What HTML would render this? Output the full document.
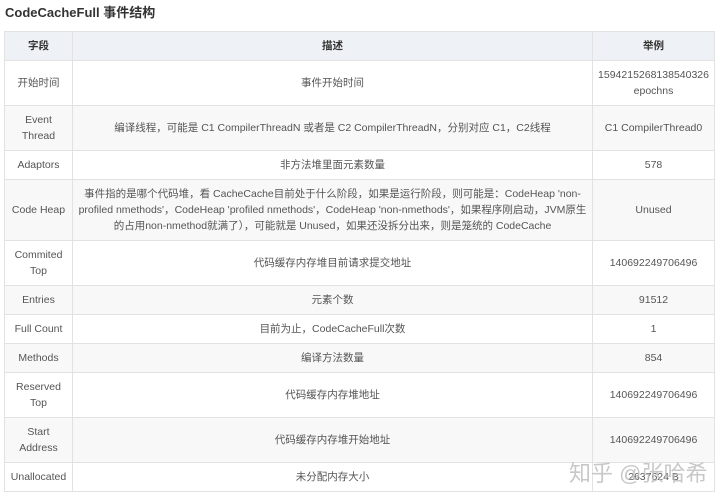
<!DOCTYPE html>
<html><head><meta charset="utf-8"><style>
body{margin:0;background:#fff;width:720px;height:498px;overflow:hidden;font-family:"Liberation Sans","Noto Sans CJK SC",sans-serif;color:#555;}
h3{position:absolute;left:5px;top:2px;margin:0;font-size:13px;font-weight:bold;color:#333;}
table{position:absolute;left:4px;top:31px;border-collapse:collapse;width:711px;font-size:10.5px;line-height:16px;}
td,th{border:1px solid #e2e2e2;text-align:center;padding:0 5px;}
th{background:#eef1f5;font-weight:bold;color:#333;height:28px;}
tr:nth-child(odd) td{background:#f8f8f8;}
.wm{position:absolute;left:569px;top:456px;font-size:22px;color:rgba(190,190,190,0.85);white-space:nowrap;}
</style></head><body>
<h3>CodeCacheFull 事件结构</h3>
<table>
<colgroup><col style="width:68px"><col style="width:522px"><col style="width:121px"></colgroup>
<tr><th>字段</th><th>描述</th><th>举例</th></tr>
<tr style="height:45px"><td>开始时间</td><td>事件开始时间</td><td>1594215268138540326 epochns</td></tr>
<tr style="height:45px"><td>Event Thread</td><td>编译线程，可能是 C1 CompilerThreadN 或者是 C2 CompilerThreadN，分别对应 C1，C2线程</td><td>C1 CompilerThread0</td></tr>
<tr style="height:29px"><td>Adaptors</td><td>非方法堆里面元素数量</td><td>578</td></tr>
<tr style="height:61px"><td>Code Heap</td><td>事件指的是哪个代码堆，看 CacheCache目前处于什么阶段，如果是运行阶段，则可能是：CodeHeap 'non-profiled nmethods'，CodeHeap 'profiled nmethods'，CodeHeap 'non-nmethods'，如果程序刚启动，JVM原生的占用non-nmethod就满了），可能就是 Unused，如果还没拆分出来，则是笼统的 CodeCache</td><td>Unused</td></tr>
<tr style="height:45px"><td>Commited Top</td><td>代码缓存内存堆目前请求提交地址</td><td>140692249706496</td></tr>
<tr style="height:29px"><td>Entries</td><td>元素个数</td><td>91512</td></tr>
<tr style="height:29px"><td>Full Count</td><td>目前为止，CodeCacheFull次数</td><td>1</td></tr>
<tr style="height:29px"><td>Methods</td><td>编译方法数量</td><td>854</td></tr>
<tr style="height:45px"><td>Reserved Top</td><td>代码缓存内存堆地址</td><td>140692249706496</td></tr>
<tr style="height:45px"><td>Start Address</td><td>代码缓存内存堆开始地址</td><td>140692249706496</td></tr>
<tr style="height:29px"><td>Unallocated</td><td>未分配内存大小</td><td>2637624 B</td></tr>
</table>
<div class="wm">知乎 @张哈希</div>
</body></html>
